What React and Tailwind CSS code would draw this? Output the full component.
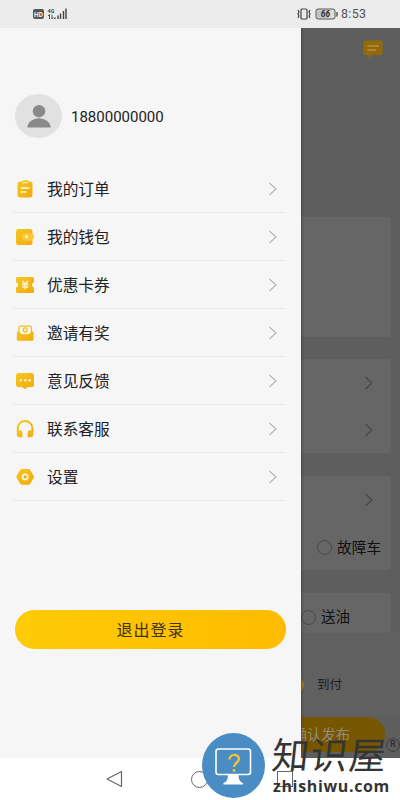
import React from "react";

const GOLD = "url(#gold)";

function OrderIcon() {
  return (
    <svg width="20" height="20" viewBox="0 0 20 20">
      <path d="M5.500 2.500h1.300C8 .8 12.800.8 14 2.500h1A2.500 2.500 0 0 1 17.500 5v10.500a3 3 0 0 1-3 3h-9a3 3 0 0 1-3-3V5.500a3 3 0 0 1 3-3z" fill={GOLD} />
      <path d="M8.200 3.600h4" stroke="#fff3cf" strokeWidth="1.300" strokeLinecap="round" />
      <path d="M6.200 9h7.600M6.200 13h4.600" stroke="#fff7df" strokeWidth="1.500" strokeLinecap="round" />
    </svg>
  );
}

function WalletIcon() {
  return (
    <svg width="20" height="20" viewBox="0 0 20 20">
      <rect x="1" y="2" width="16.500" height="16" rx="2.500" fill={GOLD} />
      <path d="M10.500 5.800h6l3 4-3 4h-6a4 4 0 0 1 0-8z" fill="#fbc63a" />
      <circle cx="11.500" cy="9.800" r="1.700" fill="#fff0bd" />
    </svg>
  );
}

function CouponIcon() {
  return (
    <svg width="20" height="20" viewBox="0 0 20 20">
      <path d="M2.500 2h15A1.500 1.500 0 0 1 19 3.500v3.800a2.700 2.700 0 0 0 0 5.200v4A1.500 1.500 0 0 1 17.500 18h-15A1.500 1.500 0 0 1 1 16.500v-4a2.700 2.700 0 0 0 0-5.200V3.500A1.500 1.500 0 0 1 2.500 2z" fill={GOLD} />
      <path d="M7.500 6l2.700 3.300L12.900 6M10.200 9.300v5M7 9.500h6.400M7 12h6.400" fill="none" stroke="#fff5d6" strokeWidth="1.400" />
    </svg>
  );
}

function InviteIcon() {
  return (
    <svg width="20" height="20" viewBox="0 0 20 20">
      <rect x="4" y="3.200" width="12.400" height="9" rx="1" fill="#fff8df" stroke="#efbc35" strokeWidth="1.200" />
      <circle cx="10.200" cy="6.900" r="2" fill="none" stroke="#edb928" strokeWidth="1.100" />
      <path d="M2 8.500h2.200l2.600 2.700h7l2.600-2.700h2.200v7.800a1.500 1.500 0 0 1-1.500 1.500H3.200a1.500 1.500 0 0 1-1.500-1.500z" fill={GOLD} />
    </svg>
  );
}

function FeedbackIcon() {
  return (
    <svg width="20" height="20" viewBox="0 0 20 20">
      <path d="M3.500 2h13A2.500 2.500 0 0 1 19 4.500v9a2.500 2.500 0 0 1-2.500 2.500h-3.200L10 18.300 6.700 16H3.500A2.500 2.500 0 0 1 1 13.500v-9A2.500 2.500 0 0 1 3.500 2z" fill={GOLD} />
      <circle cx="5.800" cy="9.300" r="1.200" fill="#fff4cf" />
      <circle cx="10.200" cy="9.300" r="1.200" fill="#fff4cf" />
      <circle cx="14.600" cy="9.300" r="1.200" fill="#fff4cf" />
    </svg>
  );
}

function ServiceIcon() {
  return (
    <svg width="20" height="20" viewBox="0 0 20 20">
      <path d="M2.800 13V9.300a7.200 7.200 0 0 1 14.600 0V13" fill="none" stroke={GOLD} strokeWidth="2" />
      <path d="M1.800 11.200h3.200a2.500 2.500 0 0 1 2.500 2.500v4.500H5a3.200 3.200 0 0 1-3.200-3.200zM18.400 11.200h-3.200a2.500 2.500 0 0 0-2.500 2.500v4.500h2.500a3.200 3.200 0 0 0 3.200-3.200z" fill={GOLD} />
    </svg>
  );
}

function SettingIcon() {
  return (
    <svg width="20" height="20" viewBox="0 0 20 20">
      <path d="M6.700 2h7a1.800 1.800 0 0 1 1.500.9l3.600 6a1.800 1.800 0 0 1 0 1.900l-3.600 6a1.800 1.800 0 0 1-1.500.9h-7a1.800 1.800 0 0 1-1.500-.9l-3.600-6a1.800 1.800 0 0 1 0-1.900l3.600-6A1.800 1.800 0 0 1 6.700 2z" fill={GOLD} />
      <circle cx="10.200" cy="9.900" r="2.500" fill="#dcae24" stroke="#fff6d8" strokeWidth="1.800" />
    </svg>
  );
}

const menu = [
  { label: "我的订单", Icon: OrderIcon },
  { label: "我的钱包", Icon: WalletIcon },
  { label: "优惠卡券", Icon: CouponIcon },
  { label: "邀请有奖", Icon: InviteIcon },
  { label: "意见反馈", Icon: FeedbackIcon },
  { label: "联系客服", Icon: ServiceIcon },
  { label: "设置", Icon: SettingIcon },
];

function Arrow({ className }) {
  return (
    <svg width="10" height="14" viewBox="0 0 10 14" className={className}>
      <path d="M1.500 1l6.500 6-6.500 6" fill="none" stroke="currentColor" strokeWidth="1.200" />
    </svg>
  );
}

function StatusBar() {
  return (
    <div className="flex h-7 shrink-0 items-center bg-[#ececec] pr-8 pl-[33px] text-[#555]">
      <svg width="36" height="14" viewBox="0 0 36 14">
        <rect x="0" y="2" width="11" height="10" rx="2" fill="#555" />
        <text x="5.500" y="9.500" textAnchor="middle" fontSize="6.500" fontWeight="bold" fill="#f4f4f4">HD</text>
        <text x="14.500" y="6" fontSize="5.500" fontWeight="bold" fill="#444">4G</text>
        <path d="M16.500 7.500v4.500M15 9l1.500-1.500M19 7.500V12M20.500 10.500L19 12" stroke="#555" strokeWidth="1" fill="none" />
        <path d="M22 12v-1.500M25 12V8.500M27.500 12V6.500M30.500 12V4M33 12V1.500" stroke="#444" strokeWidth="1.400" />
      </svg>
      <div className="ml-auto flex items-center">
        <svg width="41" height="14" viewBox="0 0 41 14">
          <path d="M1 3l1 2-1 2 1 2-1 2M13 3l-1 2 1 2-1 2 1 2" fill="none" stroke="#444" strokeWidth="1.200" />
          <rect x="4" y="2" width="6" height="10" rx="1" fill="none" stroke="#444" strokeWidth="1.200" />
          <rect x="19" y="2" width="19" height="10" rx="2" fill="#ddd" stroke="#555" />
          <rect x="20" y="3" width="12" height="8" rx="1" fill="#c4c4c4" />
          <path d="M40 5v4.500" stroke="#444" strokeWidth="1.300" />
          <text x="28.500" y="10" textAnchor="middle" fontSize="8.500" fontStyle="italic" fontWeight="bold" fill="#333">66</text>
        </svg>
        <span className="ml-[3px] w-[27px] pt-px text-[12.5px] leading-none tracking-[0.3px] whitespace-nowrap">8:53</span>
      </div>
    </div>
  );
}

function Drawer() {
  return (
    <div className="z-10 flex w-[301px] shrink-0 flex-col bg-[#f6f6f6] shadow-[0_0_3px_#333]">
      <div className="mt-[66px] flex items-center pl-[15px]">
        <div className="flex h-11 w-[47px] items-center justify-center rounded-[50%] bg-[#e1e1e1]">
          <svg width="24" height="23" viewBox="0 0 24 23" fill="#898989">
            <circle cx="12" cy="6.200" r="6.200" />
            <path d="M.4 22.500a11.600 9.300 0 0 1 23.200 0z" />
          </svg>
        </div>
        <span className="ml-[9px] pt-0.5 text-[15px] text-[#222]">18800000000</span>
      </div>
      <div className="mt-[27px] ml-3 w-[273px]">
        {menu.map(({ label, Icon }) => (
          <div key={label} className="flex h-12 items-center border-b border-[#eaeaea] pr-[7px] pl-[3px]">
            <Icon />
            <span className="ml-[12px] pt-0.5 text-[15.7px] text-[#222]">{label}</span>
            <Arrow className="ml-auto text-[#b8b8b8]" />
          </div>
        ))}
      </div>
      <button className="mt-[109px] ml-[15px] h-[39px] w-[271px] rounded-full bg-linear-to-r from-[#fdcb05] to-[#ffbb00] pt-0.5 text-[16px] tracking-[1px] text-[#40320a]">
        退出登录
      </button>
    </div>
  );
}

function DimmedPage() {
  return (
    <div className="flex min-w-0 flex-1 flex-col overflow-hidden bg-[#5e5e5e] text-[#111]">
      <div className="flex h-[189px] justify-end pt-3 pr-[17px]">
        <svg width="20" height="18" viewBox="0 0 20 18">
          <path d="M2 .5h16a1.500 1.500 0 0 1 1.500 1.500v11.500A1.500 1.500 0 0 1 18 15H9l-2.300 3-1.700-3H2A1.500 1.500 0 0 1 .5 13.500V2A1.500 1.500 0 0 1 2 .5z" fill="#946a08" />
          <path d="M4.500 6h11.500M4.500 10h8.500" stroke="#b3934a" strokeWidth="1.300" />
        </svg>
      </div>
      <div className="mr-[9px] h-[120px] shrink-0 rounded-r-sm bg-[#666]" />
      <div className="mt-[22px] mr-[9px] flex h-[94px] shrink-0 flex-col items-end rounded-r-sm bg-[#666] pr-[17px]">
        <div className="flex h-[47px] items-center text-[#484848]"><Arrow /></div>
        <div className="flex h-[47px] items-center text-[#484848]"><Arrow /></div>
      </div>
      <div className="mt-[23px] mr-[9px] flex h-[94px] shrink-0 flex-col rounded-r-sm bg-[#666]">
        <div className="flex h-12 items-center justify-end pr-[17px] text-[#484848]"><Arrow /></div>
        <div className="flex h-[46px] items-center pl-4">
          <span className="h-[15px] w-[15px] rounded-full border border-[#484848]" />
          <span className="ml-[5px] pt-0.5 text-[14.7px] whitespace-nowrap">故障车</span>
        </div>
      </div>
      <div className="mt-[23px] mr-[9px] flex h-[40px] shrink-0 items-center rounded-r-sm bg-[#666] pt-2">
        <span className="h-[15px] w-[15px] rounded-full border border-[#484848]" />
        <span className="ml-[5px] pt-0.5 text-[14.5px]">送油</span>
      </div>
      <div className="flex h-[84px] shrink-0 items-center bg-[#606060] pt-5">
        <span className="-ml-[15px] h-[18px] w-[18px] shrink-0 rounded-full bg-[#a67a00]" />
        <span className="ml-[13px] text-[12.5px] text-[#1c1c1c]">到付</span>
      </div>
      <div className="mr-[15px] flex h-[35px] shrink-0 items-center justify-end rounded-r-full bg-[#765700] pt-0.5 pr-[35px] text-[14.3px] whitespace-nowrap text-[#948b7c]">
        确认发布
      </div>
    </div>
  );
}

function NavBar() {
  return (
    <div className="flex h-[42px] shrink-0 items-center bg-white pl-[106px] text-[#666]">
      <svg width="17" height="18" viewBox="0 0 17 18">
        <path d="M15.500 1.500v15L1 9z" fill="none" stroke="currentColor" strokeWidth="1.200" strokeLinejoin="round" />
      </svg>
      <span className="ml-[68px] h-[17px] w-[17px] rounded-full border border-[#666]" />
      <span className="ml-[69px] h-4 w-4 border border-[#666]" />
    </div>
  );
}

function Watermark() {
  return (
    <div className="absolute top-[733px] left-[202px] z-20 flex">
      <svg width="63" height="65" viewBox="0 0 63 65" className="shrink-0">
        <ellipse cx="31.500" cy="32.500" rx="31.500" ry="32.500" fill="#4a8dc5" />
        <rect x="14" y="16" width="34.500" height="25.500" rx="2.500" fill="none" stroke="#fff" strokeWidth="1.600" />
        <path d="M26 41.500h10.500c0 5 1.500 7.500 4.500 8.500v1.500H21.500V50c3-1 4.500-3.500 4.500-8.500z" fill="#fff" />
        <path d="M27.500 26.500c0-6 9.500-6 9.500-.5 0 4-5 3.500-5 8" fill="none" stroke="#f4c336" strokeWidth="2.300" />
        <circle cx="32" cy="37.500" r="1.400" fill="#f4c336" />
      </svg>
      <div className="ml-[7px] text-[#343434]">
        <div className="mt-0.5 flex h-[42px]">
          <span className="-skew-x-6 text-[37px] leading-[44px] tracking-[1.5px] whitespace-nowrap">知识屋</span>
        </div>
        <div className="ml-px font-['Open_Sans'] text-[16px] leading-[18px] font-bold tracking-[0.65px]">zhishiwu.com</div>
      </div>
      <span className="absolute top-[5px] left-[184px] flex h-[14px] w-[14px] items-center justify-center rounded-full border-[1.5px] border-[#3d3d3d] text-[9px] font-bold text-[#333]">R</span>
    </div>
  );
}

export default function App() {
  return (
    <div className="relative flex h-[800px] w-[400px] flex-col overflow-hidden font-[Roboto,'Noto_Sans_CJK_SC',sans-serif]">
      <svg width="0" height="0" className="absolute">
        <linearGradient id="gold" x1="0" y1="0" x2="1" y2="1">
          <stop offset="0" stopColor="#f4c91c" />
          <stop offset="1" stopColor="#f2a812" />
        </linearGradient>
      </svg>
      <StatusBar />
      <div className="flex h-[730px] shrink-0 overflow-hidden">
        <Drawer />
        <DimmedPage />
      </div>
      <NavBar />
      <Watermark />
    </div>
  );
}
